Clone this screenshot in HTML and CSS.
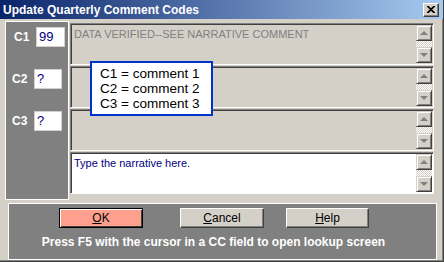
FILE: index.html
```html
<!DOCTYPE html>
<html lang="en">
<head>
<meta charset="UTF-8">
<title>Update Quarterly Comment Codes</title>
<link rel="stylesheet" href="styles.css">
</head>
<body>

<div class="window">
    <div class="titlebar">
        <span class="title">Update Quarterly Comment Codes</span>
        <button class="close">
            <svg width="8" height="7" viewBox="0 0 8 7"><path d="M0 0L7 7M1 0L8 7M7 0L0 7M8 0L1 7" stroke="#000" stroke-width="1.1"/></svg>
        </button>
    </div>

    <div class="main">
        <div class="codes">
            <div class="code-row"><label>C1</label><input class="code" value="99"></div>
            <div class="code-row"><label>C2</label><input class="code" value="?"></div>
            <div class="code-row"><label>C3</label><input class="code" value="?"></div>
        </div>

        <div class="comments">
            <div class="memo disabled">
                <div class="memo-text grey">DATA VERIFIED--SEE NARRATIVE COMMENT</div>
                <div class="scroll"><span class="sb up"></span><span class="track"></span><span class="sb down"></span></div>
            </div>
            <div class="memo disabled">
                <div class="memo-text"></div>
                <div class="scroll"><span class="sb up"></span><span class="track"></span><span class="sb down"></span></div>
            </div>
            <div class="memo disabled">
                <div class="memo-text"></div>
                <div class="scroll"><span class="sb up"></span><span class="track"></span><span class="sb down"></span></div>
            </div>
            <div class="memo">
                <div class="memo-text navy">Type the narrative here.</div>
                <div class="scroll"><span class="sb up"></span><span class="track"></span><span class="sb down"></span></div>
            </div>

            <div class="legend">
                <div>C1 = comment 1</div>
                <div>C2 = comment 2</div>
                <div>C3 = comment 3</div>
            </div>
        </div>
    </div>

    <div class="footer">
        <div class="buttons">
            <button class="btn ok"><u>O</u>K</button>
            <button class="btn cancel"><u>C</u>ancel</button>
            <button class="btn help"><u>H</u>elp</button>
        </div>
        <div class="hint">Press F5 with the cursor in a CC field to open lookup screen</div>
    </div>
</div>

</body>
</html>
```

FILE: styles.css
```css
body {
    margin: 0;
    background: #d4d0c8;
    font-family: "Liberation Sans", Arial, sans-serif;
}
.window {
    width: 444px;
    height: 262px;
    box-sizing: border-box;
    background: #d4d0c8;
    border-right: 1px solid #404040;
    border-bottom: 1px solid #404040;
    box-shadow: inset -1px -1px 0 #808080;
    position: relative;
}
.titlebar {
    height: 19px;
    background: linear-gradient(to right, #0a246a, #a6caf0);
    display: flex;
    align-items: center;
    padding-left: 3px;
    margin-bottom: 2px;
}
.title {
    color: #fff;
    font-weight: bold;
    font-size: 12px;
    flex: 1;
}
.close {
    width: 16px;
    height: 14px;
    margin-right: 4px;
    padding: 0;
    background: #d4d0c8;
    border: 1px solid;
    border-color: #fff #404040 #404040 #fff;
    box-shadow: inset -1px -1px 0 #808080;
    display: flex;
    align-items: center;
    justify-content: center;
}
.main {
    display: flex;
    padding-left: 5px;
    gap: 1px;
}
.codes {
    width: 62px;
    height: 172px;
    background: #808080;
    border: 1px solid #fff;
    display: flex;
    flex-direction: column;
    padding-top: 5px;
    gap: 22px;
    box-sizing: content-box;
}
.code-row {
    display: flex;
    align-items: center;
    padding-left: 8px;
    gap: 8px;
}
.code-row:nth-child(n+2) {
    padding-left: 6px;
}
.code-row label {
    color: #fff;
    font-weight: bold;
    font-size: 12px;
    width: 14px;
}
.code {
    width: 24px;
    height: 18px;
    box-sizing: content-box;
    padding: 0 0 0 2px;
    border: 1px solid #d4d0c8;
    background: #fff;
    color: #000080;
    font-family: "Liberation Sans", Arial, sans-serif;
    font-size: 13px;
    line-height: 18px;
}
.code-row:first-child .code {
    width: 25px;
}
.comments {
    position: relative;
    width: 364px;
    padding-top: 2px;
    display: flex;
    flex-direction: column;
    gap: 1px;
}
.memo {
    height: 42px;
    box-sizing: border-box;
    display: flex;
    background: #fff;
    border: 1px solid;
    border-color: #808080 #fff #fff #808080;
    box-shadow: inset 1px 1px 0 #404040;
    padding: 1px;
}
.memo.disabled {
    background: #d4d0c8;
}
.memo-text {
    flex: 1;
    font-size: 11px;
    padding: 3px 2px;
}
.grey {
    color: #808080;
}
.navy {
    color: #000080;
}
.scroll {
    width: 16px;
    display: flex;
    flex-direction: column;
}
.sb {
    height: 16px;
    box-sizing: border-box;
    background: #d4d0c8;
    border: 1px solid;
    border-color: #d4d0c8 #404040 #404040 #d4d0c8;
    box-shadow: inset 1px 1px 0 #fff, inset -1px -1px 0 #808080;
    display: flex;
    align-items: center;
    justify-content: center;
}
.sb::after {
    content: "";
    border-left: 4px solid transparent;
    border-right: 4px solid transparent;
}
.up::after {
    border-bottom: 4px solid #808080;
}
.down::after {
    border-top: 4px solid #808080;
}
.track {
    flex: 1;
    background: repeating-conic-gradient(#fff 0 25%, #d4d0c8 0 50%) 0 0 / 2px 2px;
}
.legend {
    position: absolute;
    left: 20px;
    top: 40px;
    width: 111px;
    height: 51px;
    background: #fff;
    border: 2px solid #0033cc;
    padding: 0 0 0 8px;
    font-size: 13.5px;
    line-height: 15px;
    color: #000;
    display: flex;
    flex-direction: column;
    justify-content: center;
}
.footer {
    margin: 3px 0 0 8px;
    width: 427px;
    height: 51px;
    background: #808080;
    border: 1px solid #fff;
    padding-top: 4px;
    box-sizing: content-box;
}
.buttons {
    display: flex;
    padding-left: 50px;
}
.btn {
    width: 84px;
    height: 20px;
    padding: 0;
    font-family: "Liberation Sans", Arial, sans-serif;
    font-size: 12px;
    color: #000;
    background: #d4d0c8;
    border: 1px solid;
    border-color: #fff #404040 #404040 #fff;
    box-shadow: inset -1px -1px 0 #808080;
}
.ok {
    background: #ffa08f;
    border: 1px solid #000;
    box-shadow: inset 1px 1px 0 #fff, inset -1px -1px 0 #404040;
}
.cancel {
    margin-left: 37px;
}
.help {
    margin-left: 22px;
    width: 83px;
}
.hint {
    color: #fff;
    font-weight: bold;
    font-size: 12px;
    text-align: center;
    margin-top: 7px;
    padding-right: 18px;
}
```
